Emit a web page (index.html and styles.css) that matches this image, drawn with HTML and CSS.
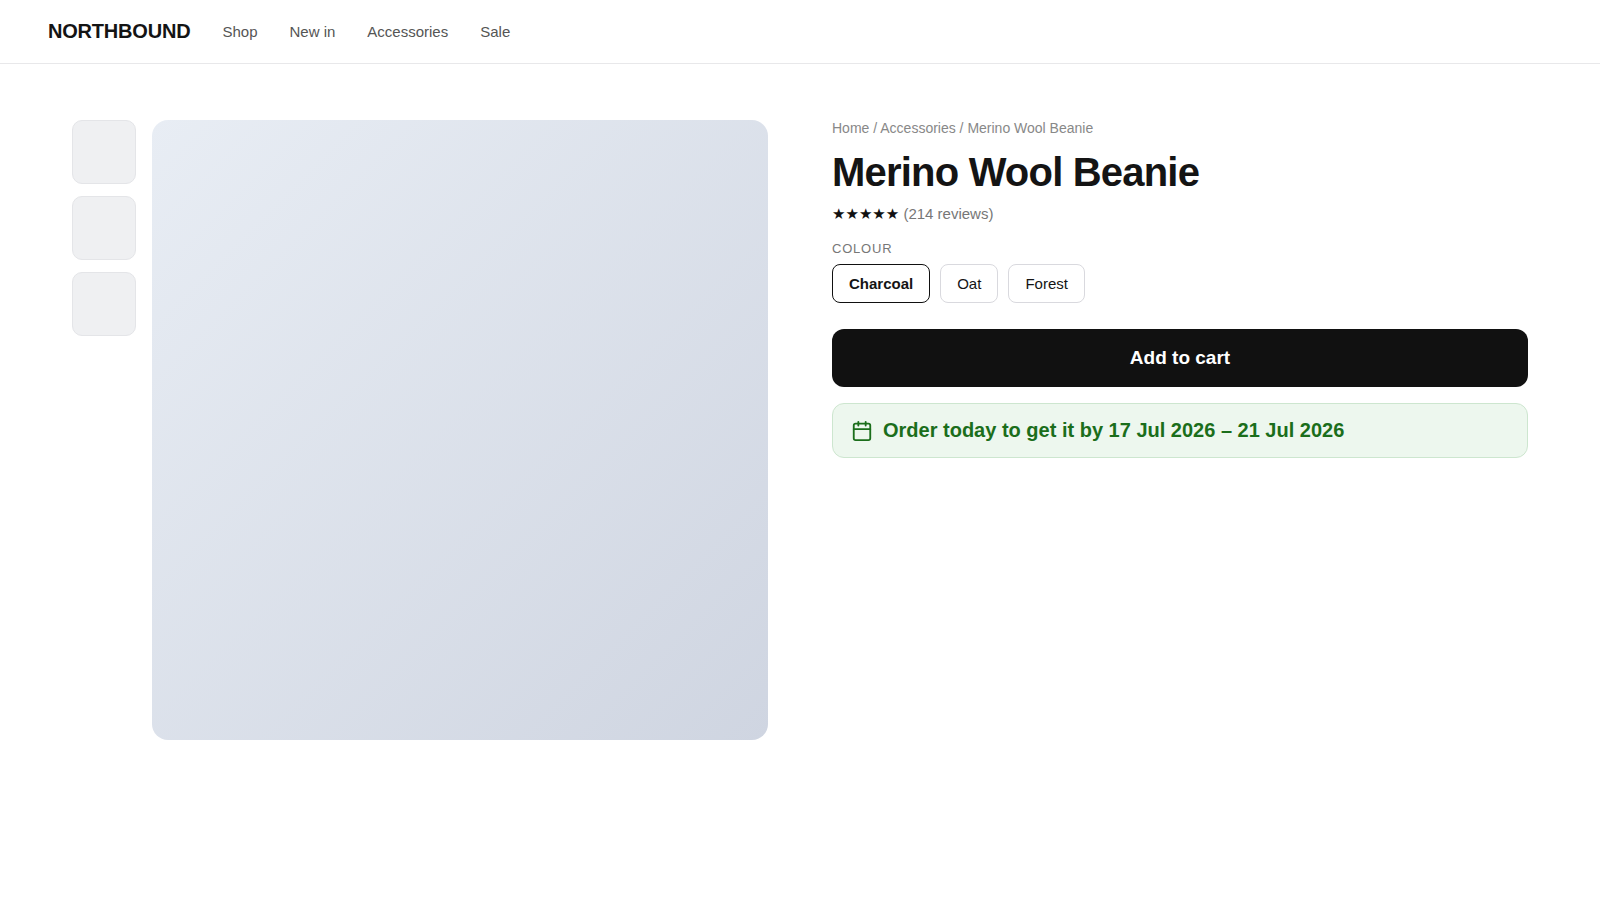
FILE: index.html
```html
<!DOCTYPE html>
<html lang="en">
<head>
    <meta charset="UTF-8">
    <meta name="viewport" content="width=device-width, initial-scale=1.0">
    <title>Merino Wool Beanie - Northbound</title>
    <link rel="stylesheet" href="styles.css">
</head>
<body>

<header>
    <div class="logo">NORTHBOUND</div>
    <nav>
        <a href="#">Shop</a>
        <a href="#">New in</a>
        <a href="#">Accessories</a>
        <a href="#">Sale</a>
    </nav>
</header>

<main class="product">
    <div class="gallery">
        <div class="thumbs">
            <div class="thumb"></div>
            <div class="thumb"></div>
            <div class="thumb"></div>
        </div>
        <div class="main-image"></div>
    </div>

    <div class="details">
        <div class="breadcrumb"><a href="#">Home</a> / <a href="#">Accessories</a> / Merino Wool Beanie</div>
        <h1>Merino Wool Beanie</h1>
        <div class="rating"><span class="stars">★★★★★</span> (214 reviews)</div>

        <div class="option-label" id="colourLabel">Colour</div>
        <div class="options" role="group" aria-labelledby="colourLabel">
            <button type="button" class="option selected" aria-pressed="true">Charcoal</button>
            <button type="button" class="option" aria-pressed="false">Oat</button>
            <button type="button" class="option" aria-pressed="false">Forest</button>
        </div>

        <button type="button" class="add-to-cart">Add to cart</button>

        <div class="delivery">
            <svg width="22" height="22" viewBox="0 0 24 24" fill="none" stroke="currentColor" stroke-width="2" stroke-linecap="round" stroke-linejoin="round" aria-hidden="true">
                <rect x="3" y="4" width="18" height="18" rx="2"/>
                <path d="M16 2v4M8 2v4M3 10h18"/>
            </svg>
            <span>Order today to get it by 17 Jul 2026 – 21 Jul 2026</span>
        </div>
    </div>
</main>

</body>
</html>
```
FILE: styles.css
```css
* {
    box-sizing: border-box;
}

body {
    font-family: "Liberation Sans", Arial, sans-serif;
    background-color: #fff;
    color: #141414;
    margin: 0;
}

a {
    color: inherit;
    text-decoration: none;
}

/* Header */
header {
    display: flex;
    align-items: center;
    gap: 32px;
    padding: 20px 48px;
    border-bottom: 1px solid #e8e8ea;
}

.logo {
    font-size: 20px;
    font-weight: bold;
    letter-spacing: -0.01em;
}

nav {
    display: flex;
    gap: 32px;
    font-size: 15px;
    color: #555;
}

/* Product layout */
.product {
    display: grid;
    grid-template-columns: 1fr 1fr;
    gap: 64px;
    padding: 56px 72px;
}

.gallery {
    display: flex;
    gap: 16px;
}

.thumbs {
    display: flex;
    flex-direction: column;
    gap: 12px;
}

.thumb {
    width: 64px;
    height: 64px;
    background-color: #eff0f2;
    border: 1px solid #e4e5e8;
    border-radius: 10px;
}

.main-image {
    flex: 1;
    height: 620px;
    background: linear-gradient(135deg, #e8edf4, #cfd5e1);
    border-radius: 16px;
}

/* Product details */
.breadcrumb {
    font-size: 14px;
    color: #888;
}

h1 {
    margin: 14px 0 10px;
    font-size: 40px;
    line-height: 44px;
    letter-spacing: -0.02em;
}

.rating {
    font-size: 15px;
    line-height: 20px;
    color: #777;
}

.stars {
    color: #111;
    font-family: "DejaVu Sans", sans-serif;
}

.option-label {
    margin: 17px 0 7px;
    font-size: 13px;
    line-height: 16px;
    letter-spacing: 0.06em;
    text-transform: uppercase;
    color: #777;
}

.options {
    display: flex;
    gap: 10px;
}

.option {
    padding: 10px 16px;
    background-color: #fff;
    border: 1px solid #d9d9de;
    border-radius: 8px;
    font-family: inherit;
    font-size: 15px;
    color: #141414;
    cursor: pointer;
}

.option.selected {
    border-color: #111;
    font-weight: bold;
}

.add-to-cart {
    width: 100%;
    margin: 26px 0 16px;
    padding: 18px;
    background-color: #111;
    border: none;
    border-radius: 12px;
    font-family: inherit;
    font-size: 19px;
    font-weight: bold;
    line-height: 22px;
    color: #fff;
    cursor: pointer;
}

.delivery {
    display: flex;
    align-items: center;
    gap: 10px;
    padding: 15px 18px;
    background-color: #edf7ee;
    border: 1px solid #cde6cf;
    border-radius: 12px;
    font-size: 20px;
    font-weight: bold;
    color: #1b6e1b;
}
```
